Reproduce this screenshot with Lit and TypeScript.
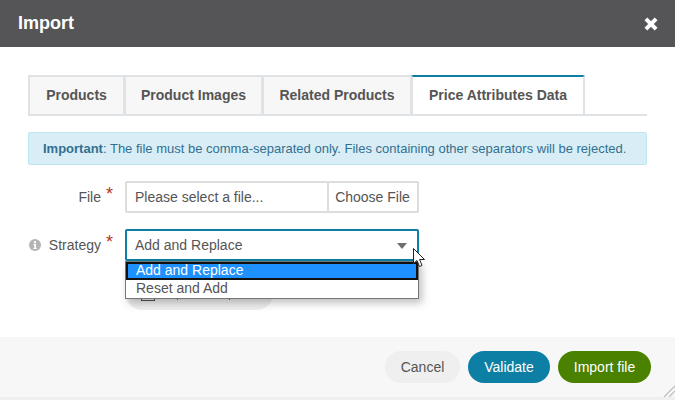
import { LitElement, html, css } from "lit";
import { customElement } from "lit/decorators.js";

@customElement("app-root")
export class AppRoot extends LitElement {
  static styles = css`
    :host { display: block; width: 675px; height: 400px; position: relative; overflow: hidden; background: #fff;
      font-family: "Liberation Sans", Arial, sans-serif; font-size: 14px; color: #555; }
    * { box-sizing: border-box; }
    .header { height: 47px; background: #555557; color: #fff; display: flex; align-items: center; justify-content: space-between; padding: 0 17px 0 18px; }
    .title { font-size: 18px; font-weight: bold; }
    .close { display: block; }
    .body { height: 290px; padding: 28px 28px 0; }
    .tabs { display: flex; height: 41px; border-bottom: 2px solid #e0e3e6; }
    .tab { height: 41px; border: 2px solid #e0e3e6; margin-left: -1px; background: #f7f7f7; font-weight: bold; color: #555; display: flex; align-items: center; justify-content: center; padding-bottom: 1px; }
    .tab:first-child { margin-left: 0; }
    .tab.active { background: #fff; border-top-color: #0d7fa5; border-radius: 2px; }
    .alert { margin-top: 16px; height: 33px; background: #d9edf7; border: 1px solid #bce8f1; border-radius: 2px; color: #31708f; padding: 0 14px; display: flex; align-items: center; font-size: 13px; white-space: pre; }
    .row { display: flex; align-items: center; margin-top: 16px; height: 32px; }
    .label { width: 73px; display: flex; justify-content: flex-end; align-items: center; color: #555; }
    .info { margin-right: 8px; display: block; }
    .req { color: #b03a1c; font-size: 18px; line-height: 14px; width: 24px; padding-left: 5px; position: relative; top: -3px; }
    .field { display: flex; height: 32px; }
    .input { width: 204px; height: 32px; border: 2px solid #ddd; border-radius: 2px 0 0 2px; padding-left: 8px; display: flex; align-items: center; }
    .choose { width: 90px; height: 32px; border: 2px solid #ddd; border-left: 0; border-radius: 0 2px 2px 0; display: flex; align-items: center; justify-content: center; padding-right: 1px; }
    .select { width: 294px; height: 32px; border: 2px solid #0d7fa5; border-radius: 2px; padding: 0 8px; display: flex; align-items: center; justify-content: space-between; background: #fff; }
    .caret { width: 0; height: 0; border-left: 5px solid transparent; border-right: 5px solid transparent; border-top: 6px solid #6f6f6f; margin-right: 2px; margin-top: 1px; }
    .underlay { position: absolute; left: 126px; top: 284px; width: 147px; height: 26px; border-radius: 0 0 16px 16px; background: #efefef; }
    .cb { position: absolute; left: 15px; top: 3px; width: 14px; height: 14px; border: 1px solid #555; }
    .bar { position: absolute; top: 7px; width: 1px; height: 9px; background: #666; }
    .dropdown { position: absolute; left: 125px; top: 261px; width: 294px; height: 38px; background: #fff; border: 1px solid #767676; box-shadow: 3px 4px 8px rgba(0,0,0,.25); }
    .opt { height: 18px; padding-left: 10px; line-height: 16px; }
    .opt.sel { background: #1e90ff; color: #fff; border: 2px solid #101010; padding-left: 8px; line-height: 13px; }
    .footer { height: 60px; background: #f7f7f7; display: flex; justify-content: flex-end; align-items: flex-start; padding: 14px 24px 0 0; gap: 8px; position: relative; }
    .btn { height: 32px; border-radius: 16px; display: flex; align-items: center; justify-content: center; }
    .cancel { width: 75px; background: #efefef; color: #555; }
    .validate { width: 82px; background: #0d7fa5; color: #fff; }
    .importf { width: 93px; background: #4a8200; color: #fff; }
    .bottom { height: 3px; background: #efefef; }
    .grip { position: absolute; right: 0; bottom: 0; display: block; }
    .cursor { position: absolute; left: 413px; top: 248px; display: block; }
  `;

  render() {
    return html`
      <div class="header">
        <span class="title">Import</span>
        <svg class="close" width="14" height="14" viewBox="0 0 14 14" aria-hidden="true"><path d="M.5 3.300 3.300.5 7 4.200 10.700.5 13.500 3.300 9.800 7 13.500 10.700 10.700 13.500 7 9.800 3.300 13.500.5 10.700 4.200 7Z" fill="#fff"/></svg>
      </div>
      <div class="body">
        <div class="tabs">
          <div class="tab" style="width:97px">Products</div>
          <div class="tab" style="width:139px">Product Images</div>
          <div class="tab" style="width:150px">Related Products</div>
          <div class="tab active" style="width:174px">Price Attributes Data</div>
        </div>
        <div class="alert"><b>Important</b>: The file must be comma-separated only. Files containing other separators will be rejected.</div>
        <div class="row">
          <div class="label">File</div>
          <span class="req">*</span>
          <div class="field">
            <div class="input">Please select a file...</div>
            <div class="choose">Choose File</div>
          </div>
        </div>
        <div class="row">
          <div class="label">
            <svg class="info" width="12" height="12" viewBox="0 0 12 12" aria-hidden="true"><circle cx="6" cy="6" r="6" fill="#b5b5b8"/><rect x="5" y="2.200" width="2" height="2" fill="#fff"/><path d="M4.500 5h2.500v4h.8v1H4.300V9h.9V6h-.7z" fill="#fff"/></svg>
            Strategy
          </div>
          <span class="req">*</span>
          <div class="field">
            <div class="select"><span>Add and Replace</span><span class="caret"></span></div>
          </div>
        </div>
      </div>
      <div class="footer">
        <div class="btn cancel">Cancel</div>
        <div class="btn validate">Validate</div>
        <div class="btn importf">Import file</div>
        <svg class="grip" width="12" height="12" viewBox="0 0 12 12" aria-hidden="true"><path d="M1 12 12 1M6 12 12 6" stroke="#bbb" stroke-width="1.200" fill="none"/></svg>
      </div>
      <div class="bottom"></div>
      <div class="underlay"><span class="cb"></span><span class="bar" style="left:51px"></span><span class="bar" style="left:103px"></span></div>
      <div class="dropdown">
        <div class="opt sel">Add and Replace</div>
        <div class="opt">Reset and Add</div>
      </div>
      <svg class="cursor" width="14" height="20" viewBox="0 0 14 20" aria-hidden="true"><path d="M.5.500V15.500L4 12.500 6.500 18.500 9 17.500 6.600 11.500H11.500Z" fill="#fff" stroke="#222" stroke-width="1"/></svg>
    `;
  }
}
